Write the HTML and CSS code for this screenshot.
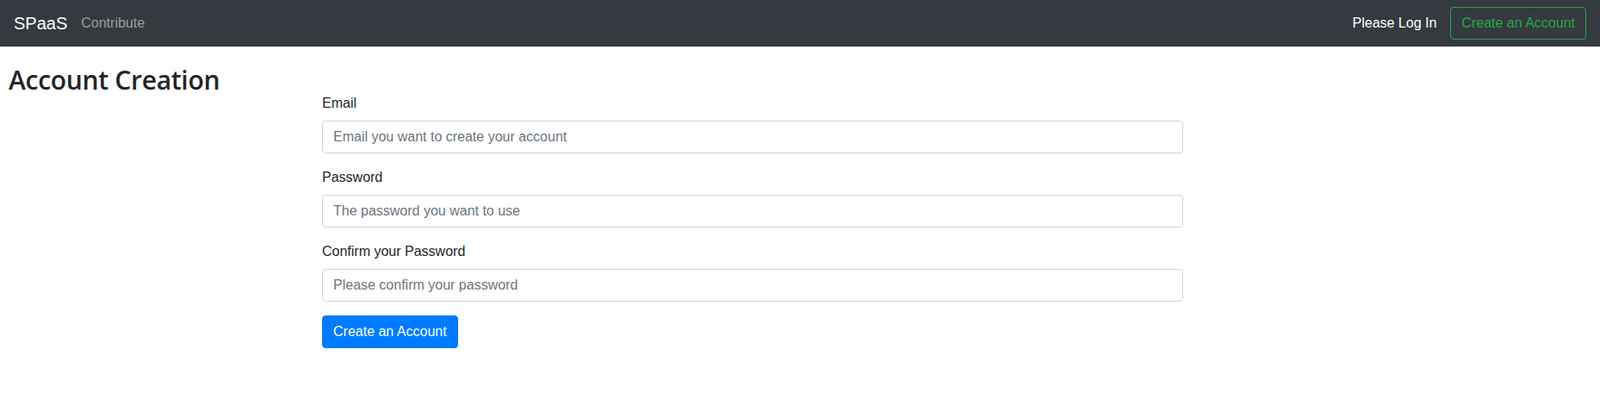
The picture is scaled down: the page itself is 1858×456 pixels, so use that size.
FILE: index.html
```html
<!DOCTYPE html>
<html lang="en">
<head>
<meta charset="utf-8">
<title>SPaaS - Account Creation</title>
<link rel="stylesheet" href="styles.css">
</head>
<body>
<nav class="navbar">
  <div class="nav-left">
    <a class="brand" href="#">SPaaS</a>
    <a class="nav-link" href="#">Contribute</a>
  </div>
  <div class="nav-right">
    <span class="nav-text">Please Log In</span>
    <a class="btn btn-outline-success" href="#">Create an Account</a>
  </div>
</nav>
<main class="page">
  <h2 class="title">Account Creation</h2>
  <form class="form">
    <div class="form-group">
      <label class="label" for="email">Email</label>
      <input class="input" id="email" type="email" placeholder="Email you want to create your account">
    </div>
    <div class="form-group">
      <label class="label" for="pw">Password</label>
      <input class="input" id="pw" type="password" placeholder="The password you want to use">
    </div>
    <div class="form-group">
      <label class="label" for="pw2">Confirm your Password</label>
      <input class="input" id="pw2" type="password" placeholder="Please confirm your password">
    </div>
    <button class="btn btn-primary" type="button">Create an Account</button>
  </form>
</main>
</body>
</html>
```
FILE: styles.css
```css
* { box-sizing: border-box; }
html, body {
  margin: 0;
  padding: 0;
}
body {
  font-family: "Segoe UI", "Liberation Sans", Arial, sans-serif;
  font-size: 16px;
  line-height: 1.5;
  color: #212529;
  background: #fff;
}
a { text-decoration: none; }

.navbar {
  display: flex;
  align-items: center;
  justify-content: space-between;
  background: #343a40;
  padding: 8px 16px;
  height: 54px;
}
.nav-left, .nav-right {
  display: flex;
  align-items: center;
}
.brand {
  color: #fff;
  font-size: 20px;
  line-height: 30px;
  padding: 5px 0;
  margin-right: 8px;
}
.nav-link {
  color: rgba(255, 255, 255, 0.5);
  padding: 8px;
}
.nav-text {
  color: #fff;
  margin-right: 16px;
}
.btn {
  display: inline-block;
  font-family: inherit;
  font-size: 16px;
  line-height: 24px;
  padding: 6px 12px;
  border: 1px solid transparent;
  border-radius: 4px;
  cursor: pointer;
}
.btn-outline-success {
  color: #28a745;
  border-color: #28a745;
  background: transparent;
}
.btn-primary {
  color: #fff;
  background: #007bff;
  border-color: #007bff;
}

.page {
  display: flex;
  align-items: flex-start;
}
.title {
  margin: 20px 0 8px 10px;
  width: 364px;
  font-family: "Segoe UI", "Open Sans", sans-serif;
  font-size: 30px;
  font-weight: 600;
  line-height: 38px;
  letter-spacing: -0.3px;
}
.form {
  width: 1000px;
  margin-top: 54px;
}
.form-group {
  margin-bottom: 16px;
}
.label {
  display: block;
  margin-bottom: 8px;
}
.input {
  display: block;
  width: 100%;
  height: 38px;
  padding: 6px 12px;
  font-family: inherit;
  font-size: 16px;
  line-height: 24px;
  color: #495057;
  background: #fff;
  border: 1px solid #ced4da;
  border-radius: 4px;
}
.input::placeholder {
  color: #6c757d;
  opacity: 1;
}
```
